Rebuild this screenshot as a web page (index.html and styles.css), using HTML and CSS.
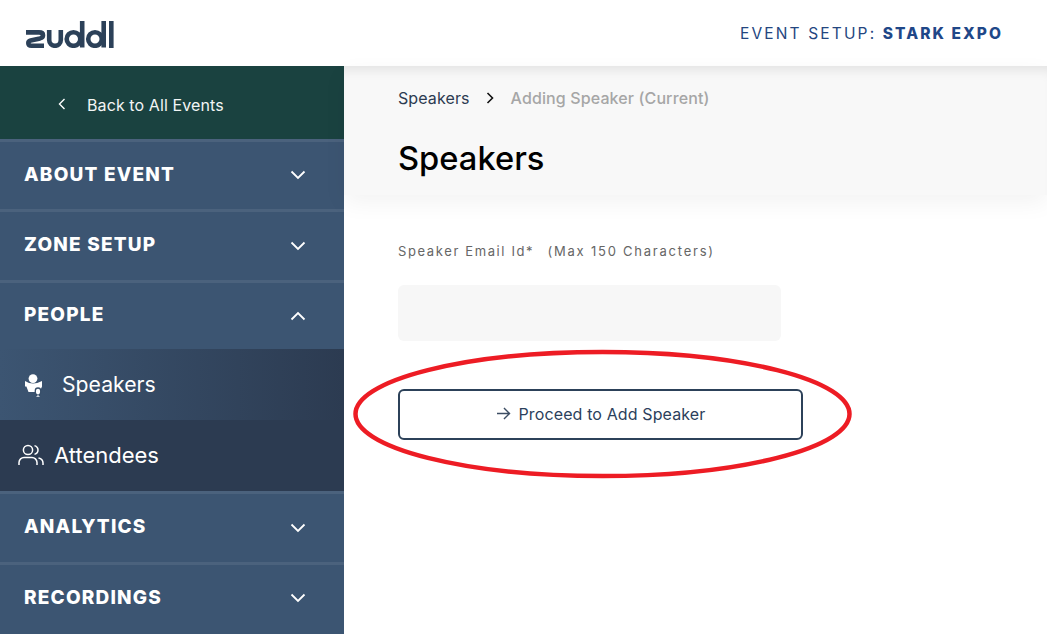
FILE: index.html
```html
<!DOCTYPE html>
<html lang="en">
<head>
<meta charset="utf-8">
<title>Event Setup: Stark Expo</title>
<link rel="stylesheet" href="styles.css">
</head>
<body>
<div class="app">
  <header class="topbar">
    <svg class="logo" viewBox="0 0 88 27" role="img" aria-label="zuddl">
      <g fill="none" stroke="#2c4159" stroke-width="4.6">
        <path d="M0 11.4H13Q17 11.4 17 14.2Q17 16.6 14 17.4L4.6 19.6Q2.3 20.2 2.3 22Q2.3 24.7 5.5 24.7H18"/>
        <path d="M23.2 9V19A5.8 5.8 0 0 0 34.8 19V9"/>
        <circle cx="47.5" cy="18" r="6.8"/>
        <path d="M56.2 0V26.5"/>
        <circle cx="69" cy="18" r="6.8"/>
        <path d="M77.7 0V26.5"/>
        <path d="M85.3 0V27"/>
      </g>
    </svg>
    <p class="event-title">EVENT SETUP: <strong>STARK EXPO</strong></p>
  </header>
  <div class="body">
    <nav class="sidebar">
      <a class="back">
        <svg class="back-icon" viewBox="0 0 8 12"><path d="M6.5 1L1.5 6L6.5 11"/></svg>
        <span>Back to All Events</span>
      </a>
      <div class="section section-short">
        <span>ABOUT EVENT</span>
        <svg class="chev" viewBox="0 0 16 10"><path d="M1.5 1.5L8 8L14.5 1.5"/></svg>
      </div>
      <div class="section">
        <span>ZONE SETUP</span>
        <svg class="chev" viewBox="0 0 16 10"><path d="M1.5 1.5L8 8L14.5 1.5"/></svg>
      </div>
      <div class="section section-open">
        <span>PEOPLE</span>
        <svg class="chev" viewBox="0 0 16 10"><path d="M1.5 8.5L8 2L14.5 8.5"/></svg>
      </div>
      <a class="sub sub-active">
        <svg class="speaker-icon" viewBox="0 0 20 24">
          <circle cx="9" cy="5.6" r="4.4" fill="#fff"/>
          <path d="M1 8Q5 10.5 9 10.5Q13 10.5 18 8V13.5L15.5 19H4.5L2.4 13.5H1Z" fill="#fff"/>
          <rect x="11.3" y="15" width="5.4" height="7" rx="2.7" fill="#fff" stroke="#384f6a" stroke-width="1.3"/>
          <path d="M14 21.5V24M12.2 24H15.8" stroke="#fff" stroke-width="1" fill="none"/>
        </svg>
        <span>Speakers</span>
      </a>
      <a class="sub sub-attendees">
        <svg class="people-icon" viewBox="0 0 26 22">
          <circle cx="10" cy="6" r="4.6"/>
          <path d="M1 21V18.5C1 15.5 3.5 13.5 6 13.5H14C16.5 13.5 19 15.5 19 18.5V21"/>
          <path d="M16.5 1.6C19 2.4 20 4 20 6C20 8 19 9.6 16.5 10.4"/>
          <path d="M20.5 14C23 14.6 25 16.3 25 19V21"/>
        </svg>
        <span>Attendees</span>
      </a>
      <div class="section">
        <span>ANALYTICS</span>
        <svg class="chev" viewBox="0 0 16 10"><path d="M1.5 1.5L8 8L14.5 1.5"/></svg>
      </div>
      <div class="section section-short">
        <span>RECORDINGS</span>
        <svg class="chev" viewBox="0 0 16 10"><path d="M1.5 1.5L8 8L14.5 1.5"/></svg>
      </div>
    </nav>
    <main class="content">
      <section class="page-head">
        <div class="crumbs">
          <span class="crumb">Speakers</span>
          <svg class="crumb-sep" viewBox="0 0 8 12"><path d="M1.5 1L6.5 6L1.5 11"/></svg>
          <span class="crumb-current">Adding Speaker (Current)</span>
        </div>
        <h1>Speakers</h1>
      </section>
      <form class="form">
        <label class="field-label" for="email">Speaker Email Id* <span class="field-hint">(Max 150 Characters)</span></label>
        <input class="field-input" id="email" type="text">
        <button class="proceed" type="button">
          <svg class="arrow" viewBox="0 0 16 14"><path d="M1 7H14.5M8.5 1L14.5 7L8.5 13"/></svg>
          <span>Proceed to Add Speaker</span>
        </button>
      </form>
    </main>
  </div>
  <svg class="annotation" viewBox="0 0 1047 634">
    <ellipse cx="602.5" cy="414" rx="247" ry="62"/>
  </svg>
</div>
</body>
</html>
```
FILE: styles.css
```css
* { box-sizing: border-box; }
html, body { margin: 0; height: 100%; overflow: hidden; background: #fff; }
body { font-family: Inter, "Liberation Sans", sans-serif; }
.app { width: 1047px; height: 634px; display: flex; flex-direction: column; position: relative; }

.topbar { height: 66px; flex: none; display: flex; align-items: center; justify-content: space-between; padding: 0 44px 0 26px; background: #fff; }
.logo { width: 88px; height: 27px; margin-top: 3px; display: block; }
.event-title { margin: 1px 0 0; font-size: 15.5px; letter-spacing: 2.15px; color: #24467f; font-weight: 400; }
.event-title strong { font-weight: 800; letter-spacing: 2.05px; color: #1f4788; }

.body { flex: 1; display: flex; min-height: 0; }
.sidebar { width: 344px; flex: none; display: flex; flex-direction: column; background: #3c5572; color: #fff; }

.back { height: 73px; flex: none; display: flex; align-items: center; padding: 5px 0 0 58px; gap: 21px; background: #1a4240; color: #f2f5f5; font-size: 16px; letter-spacing: .1px; }
.back-icon { width: 8px; height: 12px; fill: none; stroke: #fff; stroke-width: 1.4; margin-top: -3px; }

.section { height: 71px; flex: none; display: flex; align-items: center; justify-content: space-between; padding: 0 38px 3px 24px; border-top: 3px solid #4b627d; font-size: 19px; font-weight: 800; letter-spacing: 1.2px; }
.section-short { height: 70px; }
.section-open { height: 69px; }
.chev { width: 16px; height: 10px; fill: none; stroke: #fff; stroke-width: 1.8; margin-top: 2px; }

.sub { height: 71px; flex: none; display: flex; align-items: center; padding-bottom: 2px; font-size: 21.2px; color: #fff; }
.sub-active { padding-left: 24px; gap: 18px; background: linear-gradient(90deg, #3c5572 0%, #2c3b51 100%); }
.sub-attendees { padding-left: 18px; gap: 10px; background: #2c3b51; font-size: 22px; }
.speaker-icon { width: 20px; height: 24px; margin-top: 2px; }
.people-icon { width: 26px; height: 22px; fill: none; stroke: #fff; stroke-width: 1.5; }

.content { flex: 1; min-width: 0; }
.page-head { height: 129px; padding: 22px 54px 0; background: #f8f8f8; box-shadow: inset 0 12px 12px -8px rgba(0,0,0,.09), 0 8px 22px rgba(0,0,0,.05); }
.crumbs { display: flex; align-items: center; height: 20px; font-size: 16px; letter-spacing: .1px; }
.crumb { color: #2c3b51; }
.crumb-sep { width: 8px; height: 12px; margin: 0 17px 0 16px; fill: none; stroke: #111; stroke-width: 1.6; }
.crumb-current { color: #a6a6a6; font-weight: 500; letter-spacing: .12px; }
h1 { margin: 31px 0 0; font-size: 32.7px; line-height: 39px; font-weight: 500; color: #000; }

.form { padding: 48px 54px 0; display: flex; flex-direction: column; align-items: flex-start; }
.field-label { font-size: 13px; line-height: 16px; letter-spacing: 1.62px; color: #666; }
.field-hint { margin-left: 8px; letter-spacing: 1.77px; }
.field-input { display: block; width: 383px; height: 56px; margin-top: 26px; border: 0; border-radius: 6px; background: #f7f7f7; }
.proceed { margin-top: 48px; width: 405px; height: 51px; display: flex; align-items: center; justify-content: center; gap: 8px; background: #fff; border: 2px solid #2c4159; border-radius: 6px; font-family: inherit; font-size: 16px; letter-spacing: .12px; color: #2c3f5c; padding: 0 0 2px; }
.arrow { width: 15px; height: 13px; fill: none; stroke: #3c4d63; stroke-width: 1.5; }

.annotation { position: absolute; left: 0; top: 0; width: 1047px; height: 634px; pointer-events: none; }
.annotation ellipse { fill: none; stroke: #ed1c24; stroke-width: 4.5; }
```
